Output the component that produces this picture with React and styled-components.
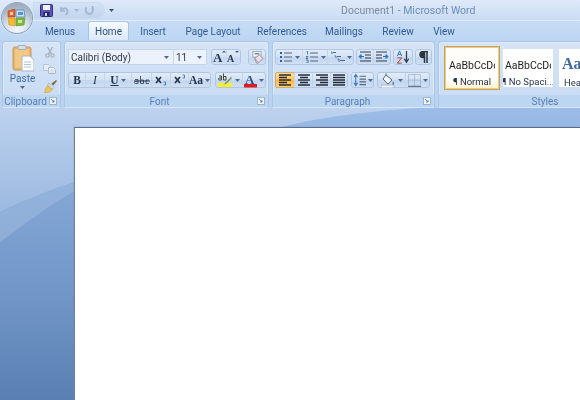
import React from 'react';
import styled, { createGlobalStyle } from 'styled-components';

const UI_FONT = '"Roboto", "Liberation Sans", sans-serif';

const Global = createGlobalStyle`
  html, body { margin: 0; padding: 0; }
  body { width: 580px; height: 400px; overflow: hidden; font-family: ${UI_FONT}; }
  #root { width: 580px; height: 400px; }
`;

const Window = styled.div`
  position: relative; width: 580px; height: 400px; display: flex; flex-direction: column; overflow: hidden;
  filter: blur(0.3px);
`;
const TitleBar = styled.div`
  height: 20px; flex: none; display: flex; align-items: center;
  background: linear-gradient(#dfeafa, #d3e2f6 55%, #c9dcf4);
  padding-left: 33px;
`;
const Orb = styled.div`
  position: absolute; left: 2px; top: 3px; width: 30px; height: 30px; border-radius: 50%; z-index: 3;
  display: flex; align-items: center; justify-content: center;
  background: radial-gradient(circle at 50% 85%, #f4f8fd 0%, #d9e3ee 35%, #a9b6c6 70%, #8c99aa 100%);
  box-shadow: 0 0 0 1px #8aa0bd, 0 0 2px 1px #eef5fd;
`;
const QuickAccess = styled.div`
  height: 17px; width: 72px; display: flex; align-items: center; padding-left: 7px; box-sizing: border-box; gap: 5px;
  background: linear-gradient(#d5e3f6, #bfd3ec); border-radius: 0 9px 9px 0;
  box-shadow: inset 0 0 0 1px #cbdbf0;
`;
const Title = styled.div`
  margin-left: 227px; font-size: 10.5px; color: #7f8b9e; white-space: pre;
  span { color: #6e8db5; }
`;
const Customize = styled.div` margin-left: 4px; display: flex; `;
const TabBar = styled.div`
  height: 20px; flex: none; display: flex; align-items: flex-end; padding-left: 32px; box-sizing: border-box;
  background: linear-gradient(#c6dbf5, #bdd6f3);
  border-top: 1px solid #e3eefb;
`;
const Tab = styled.div`
  height: ${p => (p.$active ? 19 : 18)}px; width: ${p => p.$w}px; flex: none; box-sizing: border-box;
  display: flex; align-items: center; justify-content: center; font-size: 10px; color: #2f5b93;
  ${p => p.$active ? `
    background: linear-gradient(#f7fbff, #dbe8f8); border: 1px solid #a9c3e2; border-bottom: none;
    border-radius: 3px 3px 0 0; color: #2c4f80; box-shadow: 0 -1px 0 #e6f0fc;
  ` : ''}
`;
const Ribbon = styled.div`
  height: 68px; flex: none; box-sizing: border-box; display: flex; gap: 3px; padding: 1px 0 0 2px;
  background: #bcd4f1;
`;
const Group = styled.div`
  width: ${p => p.$w}px; flex: none; height: 67px; box-sizing: border-box; display: flex; flex-direction: column;
  border: 1px solid #a9c8e8; border-bottom-color: #d6e8f9; border-radius: 3px 3px 2px 2px; overflow: hidden;
  background: linear-gradient(#d7e4f6, #cddff5 60%, #c8dcf4);
  box-shadow: inset 0 0 0 1px #dfeafa;
`;
const GroupBody = styled.div`
  flex: 1; display: flex; min-height: 0; box-sizing: border-box; padding: ${p => p.$pad || '7px 0 0 3px'};
`;
const GroupLabel = styled.div`
  position: relative; height: 13px; flex: none; display: flex; align-items: center; justify-content: center;
  padding-right: ${p => p.$shift || 0}px; font-size: 10px; color: #5a80b4; background: #bcd5f1;
  border-top: 1px solid #c9dcf3; box-sizing: border-box;
`;
const Launcher = styled.div`
  position: absolute; right: 3px; top: 2px; display: flex;
`;
const Rows = styled.div` display: flex; flex-direction: column; gap: 7px; `;
const Row = styled.div` display: flex; gap: ${p => p.$gap ?? 3}px; `;
const Strip = styled.div`
  height: 16px; box-sizing: border-box; display: flex; border: 1px solid #b0c6e2; border-radius: 3px;
  margin-left: ${p => p.$ml || 0}px;
  background: linear-gradient(#e2ecf9, #d2e1f4 50%, #c2d6ef 55%, #d0e0f4);
`;
const Btn = styled.div`
  width: ${p => p.$w}px; flex: none; height: 14px; box-sizing: border-box; display: flex; align-items: center; justify-content: center; gap: 2px;
  font-family: "Liberation Serif", serif; color: #26344a; font-size: 11.5px;
  & + & { border-left: 1px solid #c4d5ea; }
  ${p => p.$on ? 'background: linear-gradient(#ffdf9c, #ffc35a 50%, #ffb53e 55%, #ffd27f); box-shadow: 0 0 0 1px #d8a85d; border-radius: 2px;' : ''}
`;
const ComboBox = styled.div`
  width: ${p => p.$w}px; height: 16px; box-sizing: border-box; display: flex; align-items: center; justify-content: space-between;
  padding: 0 4px 0 2px; font-size: 10px; color: #30394a; border: 1px solid #c3d5ec; background: #ecf2fb;
  & + & { margin-left: -1px; }
`;
const PasteCol = styled.div`
  width: 39px; flex: none; display: flex; flex-direction: column; align-items: center; padding-top: 3px; box-sizing: border-box;
`;
const PasteText = styled.div` font-size: 10px; color: #426ca3; line-height: 12px; margin-top: 1px; `;
const CaretSlot = styled.div` margin-top: 1px; display: flex; `;
const SmallCol = styled.div` display: flex; flex-direction: column; gap: 6px; align-items: center; width: 15px; margin-top: 5px; `;
const StyleCard = styled.div`
  width: ${p => p.$w}px; flex: none; box-sizing: border-box; height: ${p => (p.$sel ? 44 : 38)}px; margin: ${p => (p.$sel ? '0' : '3px 0 0')};
  margin-left: ${p => p.$ml || 0}px;
  display: flex; flex-direction: column; align-items: ${p => p.$head ? 'flex-start' : 'center'}; overflow: hidden; background: #fff;
  ${p => p.$sel ? 'border: 2px solid #f0cd7a; outline: 1px solid #c2a06c; outline-offset: -1px; background: linear-gradient(#fffdf7, #fff 75%, #fff3cf);' : ''}
`;
const Sample = styled.div`
  height: 24px; width: ${p => p.$head ? 'auto' : '46px'}; overflow: hidden; display: flex; align-items: flex-end; white-space: nowrap; color: #222;
  font: ${p => p.$head ? '700 16px "Liberation Serif", serif' : '10.5px "Roboto", sans-serif'};
  ${p => p.$head ? 'color: #3f6a9a; padding-left: 3px; flex: none;' : ''}
`;
const StyleName = styled.div`
  font-size: 9.5px; color: #24344e; white-space: nowrap; margin-top: 4px; ${p => p.$head ? 'padding-left: 5px;' : ''}
`;
const Cards = styled.div` display: flex; gap: 3px; `;
const Workspace = styled.div`
  position: relative; flex: 1; min-height: 0; display: flex; box-sizing: border-box; padding: 19px 0 0 75px;
  background: linear-gradient(#9dbde8, #86a8d8 25%, #7095c6 65%, #5a80b3);
`;
const Decor = styled.svg` position: absolute; left: 0; top: 0; `;
const Page = styled.div`
  position: relative; flex: 1; background: #fff; box-shadow: -1px 0 1px #6f819c;
  border-top: 1px solid #5a6d8c; box-sizing: border-box;
`;

const Caret = ({ c = '#4c6a90' }) => (
  <svg width="5" height="3" viewBox="0 0 5 3"><path d="M0 0h5L2.500 3z" fill={c} /></svg>
);
const LauncherIcon = () => (
  <svg width="8" height="8" viewBox="0 0 8 8">
    <rect x=".5" y=".5" width="7" height="7" fill="#eef4fb" stroke="#9fb4cd" />
    <path d="M2 2l3 3M5 3v2H3" fill="none" stroke="#6c88aa" />
  </svg>
);
const Lines = ({ ys, x1 = 1, x2 = 13, w = 1.2, c = '#3a4655' }) => (
  <>{ys.map((y, i) => {
    const [a, b] = Array.isArray(x1) ? [x1[i], x2[i]] : [x1, x2];
    return <path key={i} d={`M${a} ${y}H${b}`} stroke={c} strokeWidth={w} />;
  })}</>
);
const Ico = ({ w = 14, h = 12, children }) => <svg width={w} height={h} viewBox={`0 0 ${w} ${h}`}>{children}</svg>;

const OfficeLogo = () => (
  <svg width="22" height="22" viewBox="0 0 22 22">
    <path d="M2 4l7-2v8H2z" fill="#e8642c" stroke="#b23c14" strokeWidth=".6" />
    <path d="M10 3h8l1 7h-9z" fill="#cfe0f2" stroke="#4a87c0" strokeWidth=".8" />
    <path d="M12 5h5v3h-5z" fill="#4b98d8" />
    <path d="M2 11h7v8l-6-1z" fill="#f4bb30" stroke="#d2902a" strokeWidth=".6" />
    <path d="M10 11h9l-1 7-8 1z" fill="#7fb83c" stroke="#5a9226" strokeWidth=".6" />
    <path d="M4 5h3v3H4z" fill="#f6cdb0" />
    <path d="M12 13h4v3h-4z" fill="#c9e59e" />
  </svg>
);
const Save = () => (
  <svg width="13" height="13" viewBox="0 0 13 13">
    <rect x=".5" y=".5" width="12" height="12" rx="1" fill="#5a55b5" stroke="#34307f" />
    <rect x="3" y="1" width="7" height="5" fill="#eef1fb" />
    <rect x="3.500" y="8" width="6" height="4.500" fill="#23236a" />
    <rect x="5" y="9" width="2" height="3" fill="#d5d8ee" />
  </svg>
);
const Undo = () => (
  <svg width="11" height="11" viewBox="0 0 11 11">
    <path d="M3 2v4h4" fill="none" stroke="#9fb5d0" strokeWidth="1.600" />
    <path d="M3 6C4 3 9 2 9.500 6c.2 2-1 3-2 3.500" fill="none" stroke="#9fb5d0" strokeWidth="1.800" />
  </svg>
);
const Redo = () => (
  <svg width="11" height="11" viewBox="0 0 11 11">
    <path d="M2.500 2.500C1 4 1 8.500 5.500 9c3 0 4-3 3-6.500" fill="none" stroke="#9fb5d0" strokeWidth="1.800" />
    <path d="M8.500 1v3.500" stroke="#9fb5d0" strokeWidth="1.600" />
  </svg>
);
const PasteIcon = () => (
  <svg width="22" height="27" viewBox="0 0 22 27">
    <rect x="1" y="2" width="18" height="23" rx="2" fill="#e5b36b" stroke="#c99a5a" />
    <rect x="3" y="4" width="14" height="19" fill="#f1c885" />
    <rect x="6" y="0.500" width="8" height="4" rx="1" fill="#d8dee5" stroke="#a3acb8" />
    <path d="M10 11h8l4 4v11H10z" fill="#fdfeff" stroke="#aab6c5" />
    <path d="M12 17h7M12 19.500h7M12 22h7" stroke="#b2c3d7" />
  </svg>
);
const Scissors = () => (
  <svg width="10" height="11" viewBox="0 0 10 11">
    <path d="M2.500 0l4 7M7.500 0l-4 7" stroke="#a2adba" strokeWidth="1.200" fill="none" />
    <circle cx="2.500" cy="8.500" r="1.700" fill="none" stroke="#a2adba" strokeWidth="1.100" />
    <circle cx="7.500" cy="8.500" r="1.700" fill="none" stroke="#a2adba" strokeWidth="1.100" />
  </svg>
);
const Copy = () => (
  <svg width="13" height="10" viewBox="0 0 13 10">
    <path d="M.5 .5h5l2 2v4h-7z" fill="#e6eef8" stroke="#b6c4d5" />
    <path d="M5.500 3.500h5l2 2v4h-7z" fill="#f4f8fd" stroke="#acbbcd" />
    <path d="M7 6h4M7 8h4" stroke="#bdcddf" />
  </svg>
);
const Brush = () => (
  <svg width="14" height="13" viewBox="0 0 15 14">
    <path d="M9 4L14 0l1 1-4 5z" fill="#7c6a4c" />
    <path d="M6 3l6 5-2 2-5-4z" fill="#d9dde2" stroke="#8c96a2" strokeWidth=".5" />
    <path d="M5 6l5 4c-2 3-5 4-9 4 2-1 1-2 2-3-1 0-1-1-1-1 1-1 2-2 3-4z" fill="#eec65d" stroke="#b48c2c" strokeWidth=".5" />
  </svg>
);
const GrowA = ({ big }) => (
  <svg width="13" height="14" viewBox="0 0 13 14">
    <text x="0" y="12" fontFamily="Liberation Serif, serif" fontWeight="700" fontSize={big ? 13 : 10} fill="#2a3850">A</text>
    {big
      ? <path d="M9 2.500l2-2 2 2z" fill="#3d5a80" />
      : <path d="M8 1l2 2 2-2z" fill="#3d5a80" />}
  </svg>
);
const ClearFormat = () => (
  <svg width="14" height="13" viewBox="0 0 15 14">
    <rect x="3" y="0.500" width="9" height="6" fill="#f1f5fb" stroke="#9aa8b8" />
    <path d="M5 8l5-4 4 4-5 5H7z" fill="#f3dfe3" stroke="#8f8f9f" />
    <path d="M5 8l4 4" stroke="#8f8f9f" />
    <path d="M5 3h5" stroke="#3a4655" />
  </svg>
);
const Script = ({ up }) => (
  <svg width="12" height="12" viewBox="0 0 12 12">
    <path d="M1 3l5 6M6 3L1 9" stroke="#26344a" strokeWidth="1.700" />
    <path d={up ? 'M8.500 1h2v3M8.500 4h2' : 'M8.500 8h2v3M8.500 11h2'} stroke="#3b75b9" strokeWidth=".9" fill="none" />
  </svg>
);
const Strike = () => (
  <svg width="16" height="12" viewBox="0 0 16 12">
    <path d="M1 5.500h3v4H1.500a1 1 0 0 1 0-2H4M6.500 2v7.500M6.500 6h3v3.500h-3M15 6h-3v3.500h3" fill="none" stroke="#4b5a6e" strokeWidth="1" />
    <path d="M0 7h16" stroke="#26344a" />
  </svg>
);
const Highlight = () => (
  <svg width="15" height="14" viewBox="0 0 15 14">
    <rect x="0" y="10" width="14" height="4" fill="#f4f12d" />
    <path d="M1 3h2.500v4H1.500a1 1 0 0 1 0-2h2M5.500 .5V7M5.500 3.500h2.500V7H5.500" fill="none" stroke="#3c4a2c" strokeWidth="1" />
    <path d="M6 11l7-7 1 1-6 6z" fill="#7f8a55" />
    <path d="M6 10l-1 2 2-1" fill="#d8d28a" />
  </svg>
);
const ColorA = () => (
  <svg width="13" height="15" viewBox="0 0 13 15">
    <text x="1" y="10.500" fontSize="13" fontFamily="Liberation Serif" fontWeight="700" fill="#2c4f96">A</text>
    <rect x="0" y="11" width="13" height="3.500" fill="#e01b24" />
  </svg>
);
const Bullets = () => (
  <Ico><Lines ys={[2, 6, 10]} x1={5} x2={13} c="#54657d" />
    {[1, 5, 9].map(y => <rect key={y} x="1" y={y} width="2" height="2" fill="#2f5f9e" />)}</Ico>
);
const Numbers = () => (
  <Ico><Lines ys={[2, 6, 10]} x1={5} x2={13} c="#54657d" />
    <path d="M1.500 .5h1v3M1 5.500h2l-2 2h2M1 9h2v3H1" fill="none" stroke="#2f5f9e" strokeWidth=".8" /></Ico>
);
const MultiLevel = () => (
  <Ico w={15}><path d="M3 1.500h3M7 5.500h4M10 9.500h5" stroke="#54657d" strokeWidth="1.200" />
    <path d="M1 1h1v2M4.500 5h1.500v2M7.500 8h1.500v3" fill="none" stroke="#2f5f9e" strokeWidth=".8" /></Ico>
);
const Indent = ({ flip }) => (
  <svg width="14" height="12" viewBox="0 0 14 12">
    <g transform={flip ? 'translate(14 0) scale(-1 1)' : undefined}>
      <Lines ys={[1, 4, 7, 10]} x1={[2, 7, 7, 2]} x2={[13, 13, 13, 13]} c="#2f3a4a" />
      <path d="M6 5.500H3M3 3.500l-2 2 2 2z" fill="#2f72bd" stroke="#2f72bd" />
    </g>
  </svg>
);
const Sort = () => (
  <svg width="16" height="14" viewBox="0 0 16 16">
    <path d="M1.500 7L4 1l2.500 6M2.500 5h3" fill="none" stroke="#2f72bd" strokeWidth="1.100" />
    <path d="M1.500 9h5l-5 6h5" fill="none" stroke="#b13c3c" strokeWidth="1.100" />
    <path d="M12 1v12M9.500 10l2.500 4 2.500-4" fill="none" stroke="#333d4d" strokeWidth="1.400" />
  </svg>
);
const Pilcrow = () => (
  <svg width="10" height="12" viewBox="0 0 10 12">
    <path d="M9 .5H4a3 3 0 0 0 0 6h1.500M5.500 .5V12M8 .5V12" fill="none" stroke="#2b3340" strokeWidth="1.500" />
    <path d="M4 1h2v5H4a2.500 2.500 0 0 1 0-5z" fill="#2b3340" />
  </svg>
);
const Align = ({ xs1, xs2 }) => (
  <Ico><Lines ys={[1, 3.5, 6, 8.500, 11]} x1={xs1} x2={xs2} w={1.300} c="#232b36" /></Ico>
);
const LineSpacing = () => (
  <svg width="13" height="14" viewBox="0 0 14 14">
    <path d="M3 2v10M1 4l2-3 2 3M1 10l2 3 2-3" fill="none" stroke="#2f72bd" strokeWidth="1.100" />
    <Lines ys={[3, 6, 9, 12]} x1={7} x2={14} c="#54657d" />
  </svg>
);
const Bucket = () => (
  <svg width="15" height="15" viewBox="0 0 15 15">
    <path d="M5 2l6 5-4 4-5-5z" fill="#f4f7fb" stroke="#5b6674" />
    <path d="M5 2V.5" stroke="#5b6674" />
    <path d="M12 8c1 2 1.500 2.500 1 3.500-.7.700-1.800 0-1.500-1z" fill="#3f78b8" />
    <rect x="0" y="12" width="13" height="3" fill="#eef3fa" stroke="#8fa2ba" strokeWidth=".7" />
  </svg>
);
const Borders = () => (
  <svg width="13" height="13" viewBox="0 0 13 13">
    <path d="M.5 .5h12v11H.5zM.5 6h12M6.500 .5v11" fill="none" stroke="#8d9bac" strokeDasharray="1 1" />
    <path d="M0 12.500h13" stroke="#6b7888" />
  </svg>
);

function Backdrop() {
  return (
    <Decor width="580" height="292" viewBox="0 0 580 292">
      <defs>
        <linearGradient id="lite" x1="0" y1="0" x2="0" y2="1">
          <stop offset="0" stopColor="#bcd2ee" />
          <stop offset="1" stopColor="#9cb9e0" />
        </linearGradient>
      </defs>
      <path d="M0 104C25 92 50 82 80 72V19H282C320 9 370 3 420 0H0z" fill="url(#lite)" />
      <path d="M0 134C25 116 50 96 80 80V72C50 82 25 92 0 104z" fill="#9fbbe0" opacity=".55" />
    </Decor>
  );
}

export default function App() {
  return (
    <Window>
      <Global />
      <Orb><OfficeLogo /></Orb>
      <TitleBar>
        <QuickAccess><Save /><Undo /><Caret c="#a4b7d0" /><Redo /></QuickAccess>
        <Customize><Caret c="#3d4f68" /></Customize>
        <Title>Document1 <span>- Microsoft Word</span></Title>
      </TitleBar>
      <TabBar>
        <Tab $w={56}>Menus</Tab>
        <Tab $w={41} $active>Home</Tab>
        <Tab $w={48}>Insert</Tab>
        <Tab $w={72}>Page Layout</Tab>
        <Tab $w={66}>References</Tab>
        <Tab $w={58}>Mailings</Tab>
        <Tab $w={50}>Review</Tab>
        <Tab $w={42}>View</Tab>
      </TabBar>
      <Ribbon>
        <Group $w={59}>
          <GroupBody $pad="0">
            <PasteCol>
              <PasteIcon />
              <PasteText>Paste</PasteText>
              <CaretSlot><Caret /></CaretSlot>
            </PasteCol>
            <SmallCol><Scissors /><Copy /><Brush /></SmallCol>
          </GroupBody>
          <GroupLabel $shift={12}>Clipboard<Launcher><LauncherIcon /></Launcher></GroupLabel>
        </Group>
        <Group $w={205}>
          <GroupBody>
            <Rows>
              <Row $gap={4}>
                <Row $gap={0}>
                  <ComboBox $w={106}>Calibri (Body)<Caret /></ComboBox>
                  <ComboBox $w={34}>11<Caret /></ComboBox>
                </Row>
                <Strip><Btn $w={14}><GrowA big /></Btn><Btn $w={14}><GrowA /></Btn></Strip>
                <Strip $ml={3}><Btn $w={16}><ClearFormat /></Btn></Strip>
              </Row>
              <Row $gap={4}>
                <Strip>
                  <Btn $w={16}><b>B</b></Btn>
                  <Btn $w={19}><i>I</i></Btn>
                  <Btn $w={27}><u><b>U</b></u><Caret /></Btn>
                  <Btn $w={20}><Strike /></Btn>
                  <Btn $w={19}><Script /></Btn>
                  <Btn $w={18}><Script up /></Btn>
                  <Btn $w={22}><b>Aa</b><Caret /></Btn>
                </Strip>
                <Strip>
                  <Btn $w={26}><Highlight /><Caret /></Btn>
                  <Btn $w={23}><ColorA /><Caret /></Btn>
                </Strip>
              </Row>
            </Rows>
          </GroupBody>
          <GroupLabel $shift={14}>Font<Launcher><LauncherIcon /></Launcher></GroupLabel>
        </Group>
        <Group $w={163}>
          <GroupBody $pad="7px 0 0 2px">
            <Rows>
              <Row $gap={2}>
                <Strip>
                  <Btn $w={26}><Bullets /><Caret /></Btn>
                  <Btn $w={25}><Numbers /><Caret /></Btn>
                  <Btn $w={26}><MultiLevel /><Caret /></Btn>
                </Strip>
                <Strip><Btn $w={16}><Indent /></Btn><Btn $w={17}><Indent flip /></Btn></Strip>
                <Strip><Btn $w={18}><Sort /></Btn></Strip>
                <Strip><Btn $w={15}><Pilcrow /></Btn></Strip>
              </Row>
              <Row $gap={3}>
                <Strip>
                  <Btn $w={18} $on><Align xs1={[1, 1, 1, 1, 1]} xs2={[13, 9, 13, 9, 13]} /></Btn>
                  <Btn $w={18}><Align xs1={[1, 3, 1, 3, 1]} xs2={[13, 11, 13, 11, 13]} /></Btn>
                  <Btn $w={18}><Align xs1={[1, 5, 1, 5, 1]} xs2={[13, 13, 13, 13, 13]} /></Btn>
                  <Btn $w={17}><Align xs1={[1, 1, 1, 1, 1]} xs2={[13, 13, 13, 13, 13]} /></Btn>
                </Strip>
                <Strip><Btn $w={21}><LineSpacing /><Caret /></Btn></Strip>
                <Strip>
                  <Btn $w={27}><Bucket /><Caret /></Btn>
                  <Btn $w={24}><Borders /><Caret /></Btn>
                </Strip>
              </Row>
            </Rows>
          </GroupBody>
          <GroupLabel $shift={12}>Paragraph<Launcher><LauncherIcon /></Launcher></GroupLabel>
        </Group>
        <Group $w={214}>
          <GroupBody $pad="4px 0 0 5px">
            <Cards>
              <StyleCard $w={56} $sel><Sample>AaBbCcDc</Sample><StyleName>¶ Normal</StyleName></StyleCard>
              <StyleCard $w={50}><Sample>AaBbCcDc</Sample><StyleName>¶ No Spaci...</StyleName></StyleCard>
              <StyleCard $w={50} $ml={3} $head><Sample $head>AaBbCc</Sample><StyleName $head>Heading 1</StyleName></StyleCard>
            </Cards>
          </GroupBody>
          <GroupLabel>Styles</GroupLabel>
        </Group>
      </Ribbon>
      <Workspace>
        <Backdrop />
        <Page />
      </Workspace>
    </Window>
  );
}
